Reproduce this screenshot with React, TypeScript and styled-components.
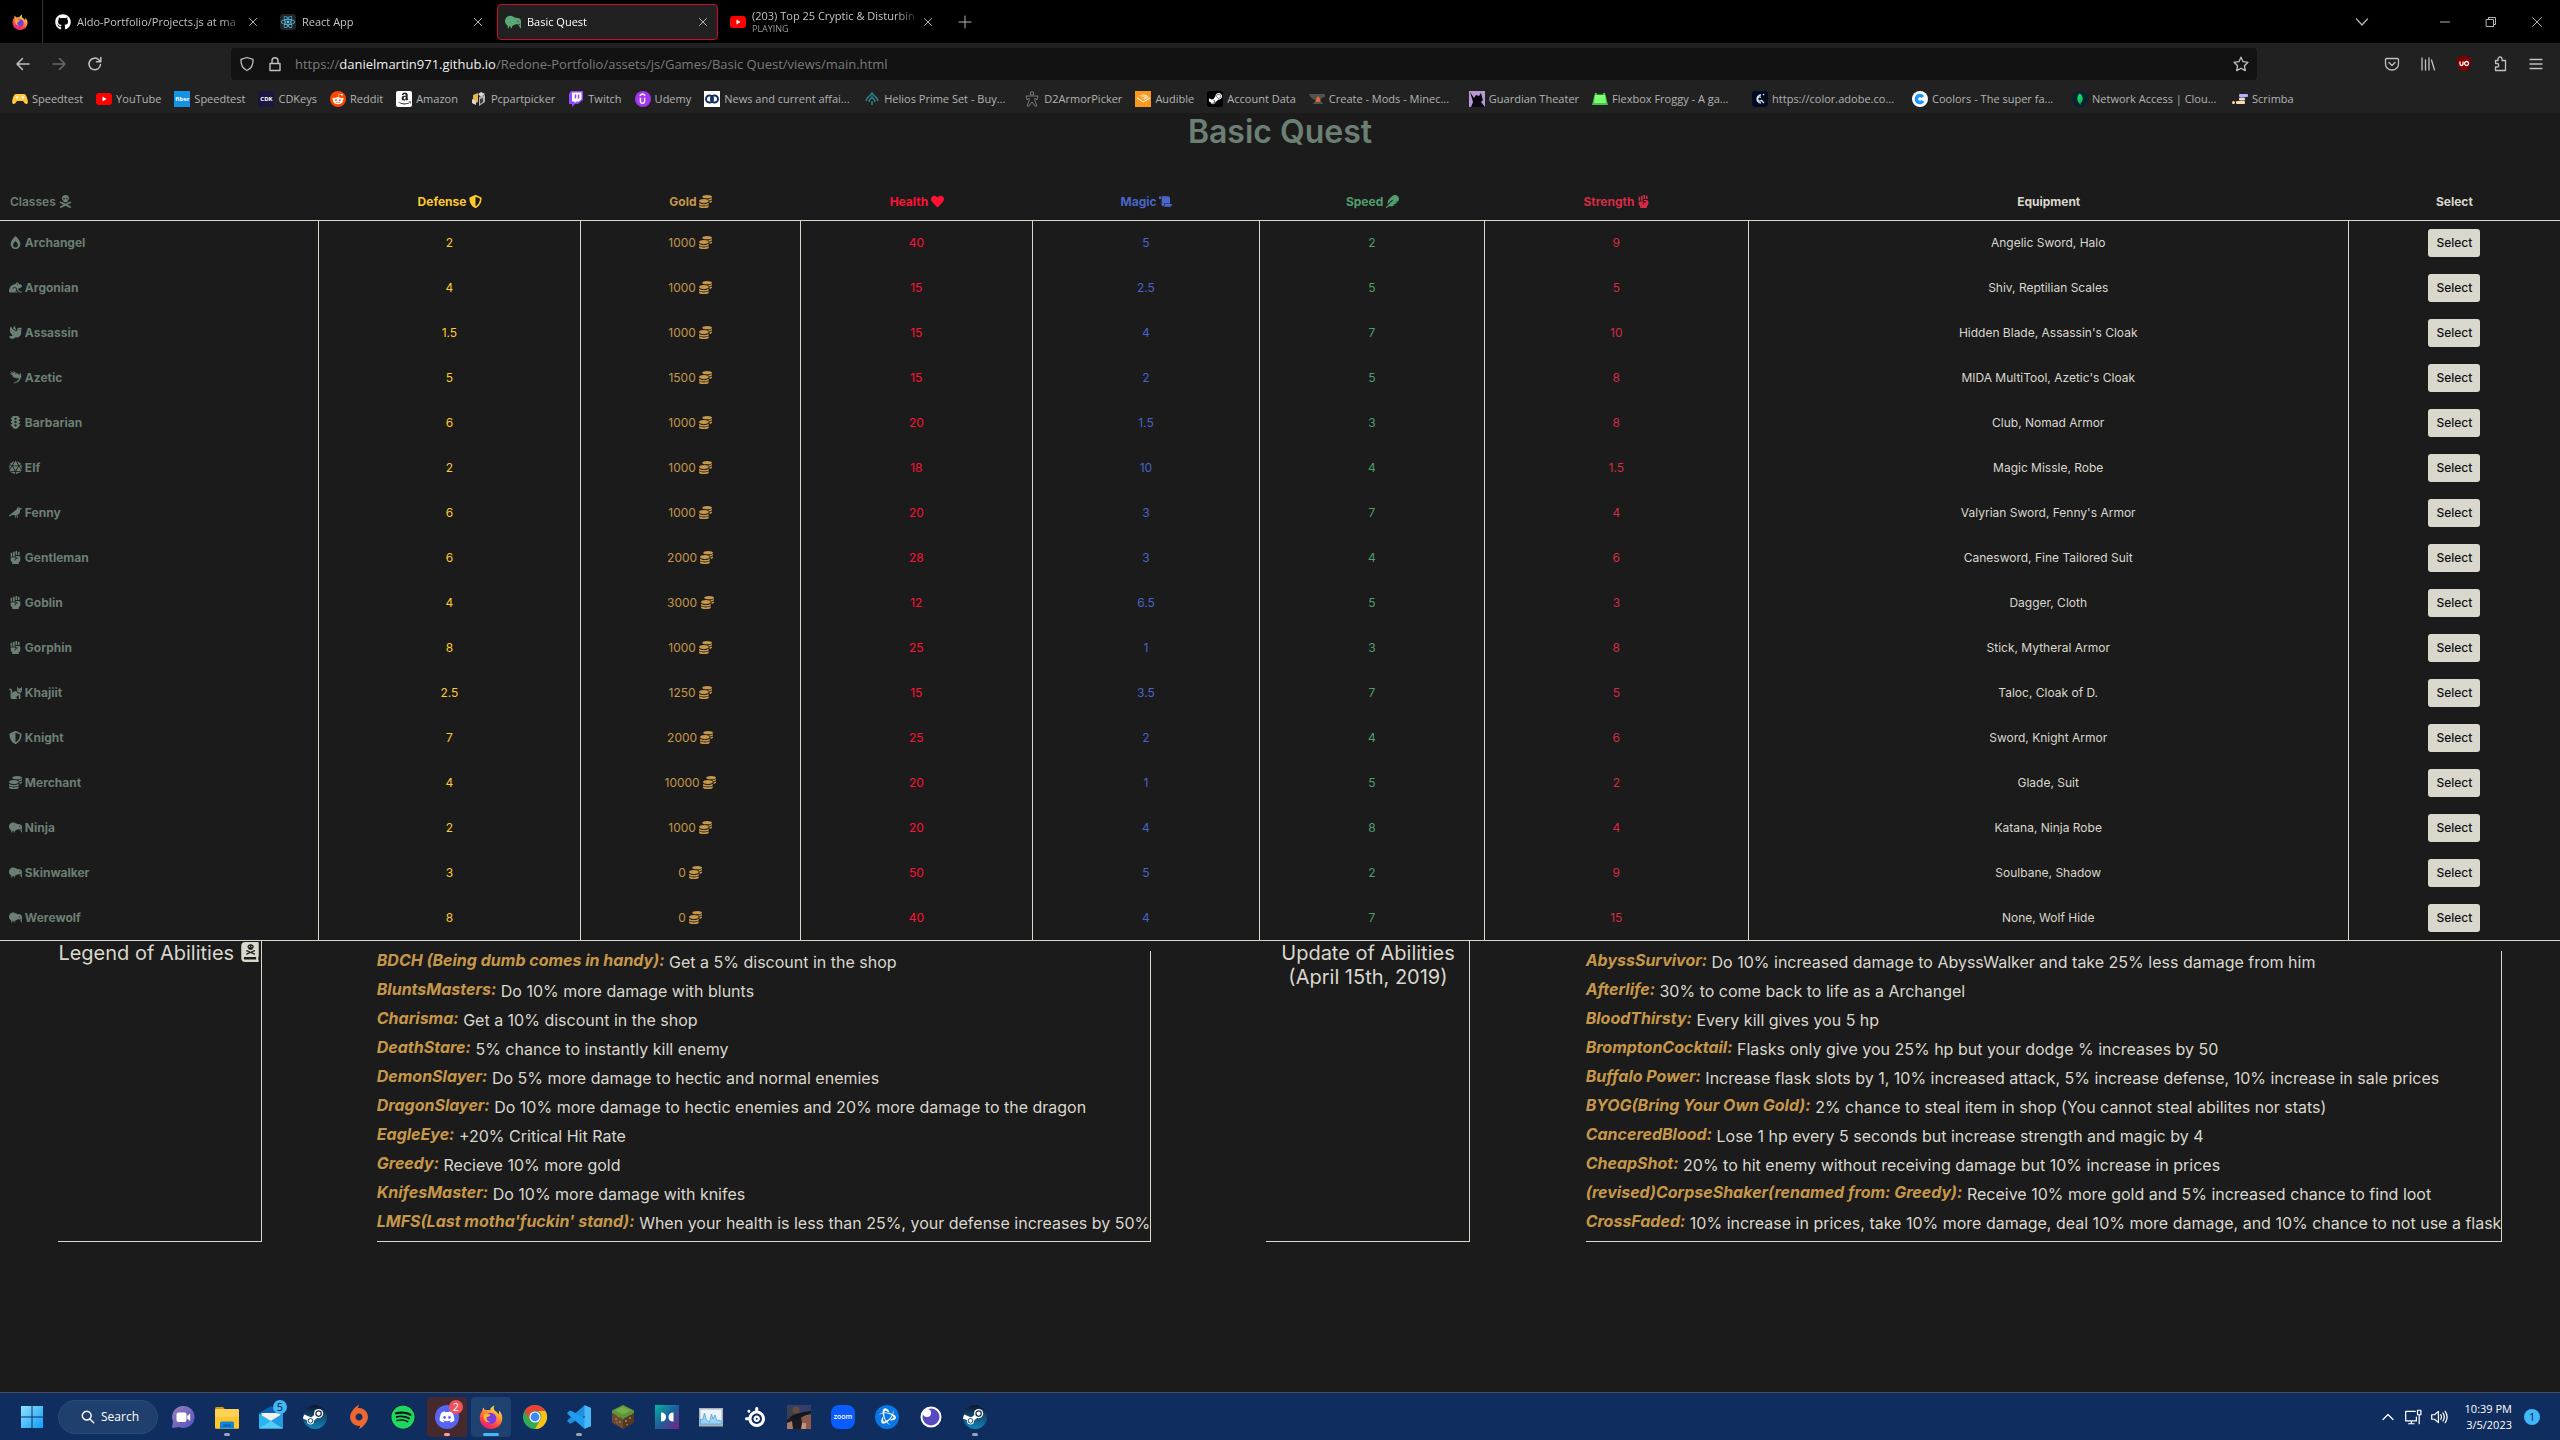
import React from "react";
import styled, { createGlobalStyle, css } from "styled-components";
import {
  FaBookDead,
  FaBurn,
  FaCat,
  FaCoins,
  FaCrow,
  FaDiceD20,
  FaDiscord,
  FaDove,
  FaFeather,
  FaFistRaised,
  FaFrog,
  FaGithub,
  FaHeart,
  FaKiwiBird,
  FaReact,
  FaRedditAlien,
  FaScroll,
  FaShieldAlt,
  FaSkullCrossbones,
  FaSpotify,
  FaSteamSymbol,
  FaStudiovinari,
  FaTrafficLight,
} from "react-icons/fa";
import {
  SiAmazon,
  SiAudible,
  SiBattledotnet,
  SiCurseforge,
  SiMongodb,
  SiOrigin,
  SiSteelseries,
  SiUdemy,
} from "react-icons/si";

const paper = "#dad7cd";
const page = "#1b1b1b";
const chromeText = "#b4b4b4";
const uiFont = `"Open Sans", "Noto Sans", sans-serif`;
const pageFont = `Inter, "Liberation Sans", sans-serif`;

const GlobalStyle = createGlobalStyle`
  * { box-sizing: border-box; }
  body { margin: 0; background: ${page}; }
  button, input { font: inherit; color: inherit; }
`;

const Screen = styled.div`
  min-height: 100vh;
  display: flex;
  flex-direction: column;
  background: ${page};
`;

/* ---------- browser window ---------- */

const bare = css`
  border: 0;
  padding: 0;
  background: none;
  display: grid;
  place-items: center;
`;

const TabStrip = styled.div`
  display: flex;
  align-items: center;
  height: 43px;
  background: #000;
  color: #c4c4c4;
  font: 11px/14px ${uiFont};
`;

const ViewButton = styled.button`
  ${bare}
  width: 43px;
  height: 43px;
  padding-right: 3px;
  border-right: 1px solid #333;
`;

const TabList = styled.div`
  display: flex;
  gap: 4px;
  padding-left: 4px;
`;

const Tab = styled.div<{ $active?: boolean }>`
  display: flex;
  align-items: center;
  width: 221px;
  height: 36px;
  padding: 0 6px 0 7px;
  border: 1px solid ${(p) => (p.$active ? "#c8102e" : "transparent")};
  border-radius: 4px;
  background: ${(p) => (p.$active ? "#212121" : "transparent")};
  color: ${(p) => (p.$active ? "#fff" : "inherit")};
`;

const TabText = styled.div`
  flex: 1;
  min-width: 0;
  padding-left: 6px;
  white-space: nowrap;
  mask-image: linear-gradient(to left, transparent, #000 24px);
`;

const TabNote = styled.div`
  font-size: 9px;
  line-height: 11px;
  color: #9a9a9a;
`;

const PlainButton = styled.button<{ $w?: number }>`
  ${bare}
  flex: none;
  width: ${(p) => p.$w ?? 16}px;
  height: 16px;
  color: ${chromeText};
`;

const NewTab = styled(PlainButton)`
  margin-left: 14px;
`;

const WindowButtons = styled.div`
  display: flex;
  align-items: center;
  margin-left: auto;
`;

const Toolbar = styled.div`
  display: flex;
  align-items: center;
  padding: 5px 8px 4px 7px;
  background: #212121;
  color: #c0c0c0;
`;

const NavButtons = styled.div`
  display: flex;
  gap: 4px;
  width: 224px;
`;

const ToolButton = styled.button<{ $dim?: boolean }>`
  ${bare}
  width: 32px;
  height: 32px;
  opacity: ${(p) => (p.$dim ? 0.45 : 1)};
`;

const AddressBar = styled.div`
  display: flex;
  align-items: center;
  gap: 12px;
  flex: 1;
  height: 32px;
  padding: 0 8px;
  border-radius: 4px;
  background: #121212;
`;

const Address = styled.a`
  flex: 1;
  font: 13px/20px ${uiFont};
  color: #7b7b7b;
  text-decoration: none;
  white-space: nowrap;
  b {
    font-weight: 400;
    color: #f0f0f0;
  }
`;

const ToolGroup = styled.div`
  display: flex;
  gap: 4px;
  width: 295px;
  justify-content: flex-end;
`;

const Bookmarks = styled.nav`
  display: flex;
  align-items: center;
  gap: 13px;
  height: 29px;
  padding: 0 12px;
  background: #212121;
`;

const Bookmark = styled.a<{ $full: boolean }>`
  display: flex;
  flex: none;
  align-items: center;
  gap: 4px;
  width: ${(p) => (p.$full ? "147px" : "auto")};
  color: ${chromeText};
  font: 11px/16px ${uiFont};
  text-decoration: none;
  white-space: nowrap;
`;

const Favicon = styled.span<{ $bg?: string; $fg?: string; $round?: number }>`
  display: grid;
  place-items: center;
  flex: none;
  width: 16px;
  height: 16px;
  overflow: hidden;
  border-radius: ${(p) => p.$round ?? 0}px;
  background: ${(p) => p.$bg ?? "none"};
  color: ${(p) => p.$fg ?? "#fff"};
  font: bold 6px/16px ${uiFont};
`;

/* ---------- game page ---------- */

const Game = styled.main`
  flex: 1;
  color: ${paper};
  font: 12px/18px ${pageFont};
`;

const Title = styled.h1`
  margin: 0 0 32px;
  color: #6b7f73;
  font-size: 32px;
  font-weight: 600;
  line-height: 38px;
  text-align: center;
`;

const ClassTable = styled.table`
  width: 100%;
  table-layout: fixed;
  border-collapse: separate;
  border-spacing: 0;
  text-align: center;
`;

const Col = styled.col<{ $share: number }>`
  width: ${(p) => p.$share}%;
`;

const Th = styled.th<{ $tone?: string }>`
  height: 38px;
  padding: 0;
  border-bottom: 1px solid ${paper};
  color: ${(p) => p.$tone ?? paper};
  &:first-child {
    padding-left: 10px;
    text-align: left;
    font-weight: 600;
  }
`;

const Row = styled.tr`
  height: 45px;
  & > :not(:last-child) {
    border-right: 1px solid ${paper};
  }
  &:last-child > * {
    border-bottom: 1px solid ${paper};
  }
`;

const Td = styled.td<{ $tone?: string }>`
  padding: 0 0 1px;
  color: ${(p) => p.$tone ?? paper};
`;

const NameCell = styled.th`
  padding: 0 0 1px 9px;
  color: #6b7f73;
  font-weight: 700;
  text-align: left;
`;

const Glyph = styled.span<{ $size: number }>`
  display: inline-block;
  vertical-align: -2px;
  font-size: ${(p) => p.$size}px;
  line-height: 0;
  svg {
    width: auto;
    height: 1em;
  }
`;

const SelectButton = styled.button`
  width: 52px;
  height: 28px;
  padding: 0;
  border: 0;
  border-radius: 3px;
  background: ${paper};
  color: #111;
  font-weight: 500;
`;

const Abilities = styled.div`
  display: flex;
  justify-content: space-around;
`;

const Heading = styled.h2`
  width: 204px;
  margin: 0;
  border: solid ${paper};
  border-width: 0 1px 1px 0;
  font-size: 20px;
  font-weight: 400;
  line-height: 24px;
  text-align: center;
`;

const AbilityList = styled.ul`
  margin: 10px 0 0;
  padding: 0;
  list-style: none;
  border: solid ${paper};
  border-width: 0 1px 1px 0;
`;

const Ability = styled.li`
  height: 29px;
  font-size: 16px;
  line-height: 22px;
  white-space: nowrap;
  em {
    color: #c69749;
    font-weight: 700;
    line-height: 16px;
    vertical-align: 2px;
  }
`;

/* ---------- taskbar ---------- */

const Taskbar = styled.footer`
  display: flex;
  align-items: center;
  gap: 4px;
  height: 48px;
  padding: 0 20px 0 12px;
  border-top: 1px solid #434d5e;
  background: #0f2d5e;
  color: #fff;
  font: 12px/16px ${uiFont};
`;

const AppButton = styled.button<{ $tint?: string; $run?: string; $wide?: boolean }>`
  ${bare}
  position: relative;
  width: 40px;
  height: 40px;
  border-radius: 4px;
  background: ${(p) => p.$tint ?? "none"};
  &::after {
    content: "";
    position: absolute;
    left: 50%;
    bottom: 1px;
    width: ${(p) => (p.$wide ? 16 : 6)}px;
    height: 3px;
    border-radius: 2px;
    transform: translateX(-50%);
    background: ${(p) => p.$run ?? "none"};
  }
`;

const SearchButton = styled.button`
  display: flex;
  align-items: center;
  gap: 6px;
  width: 100px;
  height: 34px;
  margin: 0 1px 0 2px;
  padding: 0 0 0 22px;
  border: 1px solid #2b4a78;
  border-radius: 17px;
  background: #1f3f6d;
`;

const Badge = styled.span<{ $bg: string; $fg: string }>`
  position: absolute;
  top: 3px;
  right: 4px;
  display: grid;
  place-items: center;
  width: 14px;
  height: 14px;
  border-radius: 50%;
  background: ${(p) => p.$bg};
  color: ${(p) => p.$fg};
  font-size: 11px;
  line-height: 14px;
`;

const Tray = styled.div`
  display: flex;
  align-items: center;
  gap: 8px;
  margin-left: auto;
`;

const Clock = styled.time`
  width: 56px;
  font-size: 11px;
  text-align: right;
`;

const Notice = styled.span`
  display: grid;
  place-items: center;
  width: 16px;
  height: 16px;
  margin-left: 4px;
  border-radius: 50%;
  background: #41b8f9;
  color: #0a1a30;
  font-size: 10px;
`;

/* ---------- drawings ---------- */

type LineProps = { d: string; s?: number; w?: number; v?: number };
const Line = ({ d, s = 16, w = 1, v = 16 }: LineProps) => (
  <svg width={s} height={s} viewBox={`0 0 ${v} ${v}`} fill="none" stroke="currentColor" strokeWidth={w} strokeLinecap="round" strokeLinejoin="round" aria-hidden>
    <path d={d} />
  </svg>
);

const Cross = () => <Line d="M4.500 4.500l7 7M11.500 4.500l-7 7" />;

const Firefox = ({ s, id }: { s: number; id: string }) => (
  <svg width={s} height={s} viewBox="0 0 24 24" aria-hidden>
    <defs>
      <linearGradient id={id} x1="0.8" y1="0" x2="0.3" y2="1">
        <stop offset="0" stopColor="#fff44f" />
        <stop offset="0.35" stopColor="#ffa436" />
        <stop offset="0.7" stopColor="#ff4a3c" />
        <stop offset="1" stopColor="#e31587" />
      </linearGradient>
    </defs>
    <path fill={`url(#${id})`} d="M15.500 0.600c-1 1.600-1.200 3 .1 5C18 7 19 8 19.400 9.800c.6-1.200.8-2.800.5-4.300 2.400 2.200 3.600 5 3.400 8.300C22.800 20 18 24 12 24S.9 19.200.8 13c0-3 1-5.600 2.600-7.200C3.400 4.500 3.700 3.400 4.400 2.400 5.200 4 6 5 7.400 5.300c1.200-.4 2.600-.4 3.700 0C11.500 3 13.200 1.200 15.500.6z" />
    <circle cx="11.800" cy="13.400" r="5.600" fill="#7a3ee0" />
    <path fill="#ffb52e" d="M4.500 9.500c2.300-1.200 4.900-.9 7 .4-.4 1.300-2 1.600-3.600 2.100-1 2.500.7 4.600 3.300 4.900-3.600 1.600-7.500-2.400-6.700-7.400z" />
  </svg>
);

const Play = ({ s = 16 }: { s?: number }) => (
  <svg width={s} height={s} viewBox="0 0 16 16" style={{ flex: "none" }} aria-hidden>
    <rect y="2" width="16" height="12" rx="3" fill="#f00" />
    <path d="M6.500 5.500v5l4-2.500z" fill="#fff" />
  </svg>
);

const Pixel = ({ children, s = 24 }: { children: React.ReactNode; s?: number }) => (
  <svg width={s} height={s} viewBox="0 0 24 24" aria-hidden>
    {children}
  </svg>
);

const Steam = ({ id }: { id: string }) => (
  <Pixel>
    <defs>
      <linearGradient id={id} x1="0" y1="0" x2="0" y2="1">
        <stop offset="0" stopColor="#0d1530" />
        <stop offset="1" stopColor="#1387b8" />
      </linearGradient>
    </defs>
    <circle cx="12" cy="12" r="12" fill={`url(#${id})`} />
    <path d="M0.500 11.500l8 3.500 7-6" stroke="#fff" strokeWidth="4.200" fill="none" />
    <circle cx="7.500" cy="15.800" r="3.600" fill="#fff" />
    <circle cx="15.600" cy="8.600" r="4.600" fill="#fff" />
    <circle cx="15.600" cy="8.600" r="2.700" fill="#fff" stroke="#17284a" strokeWidth="1.200" />
    <circle cx="7.500" cy="15.800" r="2.300" fill="none" stroke="#17477a" />
  </Pixel>
);

const WindowsLogo = () => (
  <Pixel>
    <defs>
      <linearGradient id="win" x1="0" y1="0" x2="1" y2="1">
        <stop offset="0" stopColor="#8fe3ff" />
        <stop offset="1" stopColor="#0f9bf5" />
      </linearGradient>
    </defs>
    <path fill="url(#win)" d="M1 1h10.500v10.500H1zM12.500 1H23v10.500H12.500zM1 12.500h10.500V23H1zM12.500 12.500H23V23H12.500z" />
  </Pixel>
);

const ChatLogo = () => (
  <Pixel>
    <defs>
      <linearGradient id="chat" x1="0" y1="0" x2="1" y2="1">
        <stop offset="0" stopColor="#9b7fb5" />
        <stop offset="1" stopColor="#4f52c4" />
      </linearGradient>
    </defs>
    <path fill="url(#chat)" d="M12.500 1A11 11 0 1 1 8 22L1 23l1-6.500A11 11 0 0 1 12.500 1z" />
    <rect x="5.500" y="7.500" width="10" height="9.500" rx="2" fill="#fff" />
    <path d="M16.200 11l3-2.500v7.500l-3-2.500z" fill="#fff" />
  </Pixel>
);

const FolderLogo = () => (
  <Pixel>
    <path d="M0 3.500Q0 2 1.500 2H8l2.500 3H0z" fill="#d79a0c" />
    <rect y="4" width="24" height="19.500" rx="1" fill="#ffd257" />
    <path d="M0 12h24v10.500q0 1-1 1H1q-1 0-1-1z" fill="#fcc62f" />
    <path d="M5 23.500V18q0-1.500 1.500-1.500h11Q19 16.500 19 18v5.500z" fill="#1583d4" />
    <rect x="8" y="19.500" width="8" height="2" rx="1" fill="#0b5ea5" />
  </Pixel>
);

const MailLogo = () => (
  <Pixel>
    <path d="M0 8l12-7 12 7v5H0z" fill="#0f5fb0" />
    <path d="M2.500 8h19v7l-9.500 5-9.500-5z" fill="#f1f1f1" />
    <path d="M0 8.500L24 23.500H0z" fill="#2bb5ef" />
    <path d="M24 8.500v15H0z" fill="#57cbf8" />
    <path d="M24 8.500v15L12 16z" fill="#239be0" />
  </Pixel>
);

const ChromeLogo = () => (
  <Pixel>
    <circle cx="12" cy="12" r="12" fill="#34a853" />
    <path d="M1.600 6A12 12 0 0 1 22.400 6H12a6 6 0 0 0-5.200 9z" fill="#ea4335" />
    <path d="M22.400 6A12 12 0 0 1 12 24l5.200-9A6 6 0 0 0 15 6z" fill="#fbc116" />
    <circle cx="12" cy="12" r="5.600" fill="#fff" />
    <circle cx="12" cy="12" r="4.400" fill="#4285f4" />
  </Pixel>
);

const CodeLogo = () => (
  <Pixel>
    <path d="M17 1L2.200 14.500q-1 .9-1.900.1L0 14q-.5-.8.300-1.500M17 23L2.200 9.500" fill="none" />
    <path d="M17.500.2L24 3v4.500L4.200 18.200q-.9.600-1.700 0L.6 16.600q-.8-.9 0-1.700z" fill="#1f8fe0" />
    <path d="M17.500 23.800L24 21v-4.500L4.200 5.800q-.9-.6-1.700 0L.6 7.400q-.8.900 0 1.700z" fill="#1f9cf0" />
    <path d="M17.500.2L24 3v18l-6.500 2.800z" fill="#48b9f7" />
  </Pixel>
);

const BlockLogo = () => (
  <Pixel>
    <path d="M12 0l11 5.500v12L12 24 1 17.500v-12z" fill="#6b4a30" />
    <path d="M12 12l11-6v11.500L12 24z" fill="#54391f" />
    <path d="M12 0l11 5.500v2L20 10l-2 .5-2 1.500-2 .5-2 2-2-2-3-.5-2-2-4-2v-2.500z" fill="#5d9438" />
    <path d="M12 1.500l8 4-8 4-8-4z" fill="#74ad4a" />
    <path d="M4 13h2v2H4zM8 16h2v2H8zM14 15h2v2h-2zM18 12h2v2h-2zM5 17h2v1H5zM15 19h2v1h-2z" fill="#96704c" />
  </Pixel>
);

const MirrorLogo = () => (
  <Pixel>
    <defs>
      <linearGradient id="mirror" x1="0" y1="0" x2="1" y2="1">
        <stop offset="0" stopColor="#05b5a0" />
        <stop offset="0.5" stopColor="#1c5f9b" />
        <stop offset="1" stopColor="#7b2384" />
      </linearGradient>
    </defs>
    <rect width="24" height="24" fill="url(#mirror)" />
    <path d="M6 7.500q5 0 5 4.500t-5 4.500zM18.500 7.500q-5 0-5 4.500t5 4.500z" fill="#fff" />
  </Pixel>
);

const MonitorLogo = () => (
  <Pixel>
    <rect y="3" width="24" height="18.500" fill="#a9b4bd" />
    <rect x="1.500" y="4.500" width="21" height="14.500" fill="#edf3f8" />
    <path d="M1.500 19v-5l2 1 2-7 2 7 3 2 2-8 1.500 5 2-4 2 6 2-1 2.500 1V19z" fill="#9ed2f5" stroke="#4ba3dd" strokeWidth="0.800" />
  </Pixel>
);

const SoldierLogo = () => (
  <Pixel>
    <rect width="24" height="24" fill="#3b3f52" />
    <path d="M0 0h24v9H14z" fill="#35406a" />
    <path d="M13 10h11v14H10z" fill="#8c5a4c" />
    <path d="M0 15l6-5 8 2 2 12H0z" fill="#1c1a21" />
    <circle cx="9" cy="5" r="3.500" fill="#6b4a3e" />
    <path d="M3 12l6-3 8-2 7-1v2l-7 3-8 4z" fill="#14151c" />
    <path d="M0 18l5-2 1 8H0z" fill="#a97b68" />
    <path d="M15 18h4v6h-5z" fill="#c39078" />
  </Pixel>
);

const ZoomLogo = styled.span`
  display: grid;
  place-items: center;
  width: 24px;
  height: 24px;
  border-radius: 8px;
  background: #0b5cff;
  color: #fff;
  font: 600 7px/10px ${uiFont};
`;

const Disc = styled.span<{ $bg: string; $fg: string; $size: number }>`
  display: grid;
  place-items: center;
  width: 24px;
  height: 24px;
  border-radius: 50%;
  background: ${(p) => p.$bg};
  color: ${(p) => p.$fg};
  font-size: ${(p) => p.$size}px;
`;

/* ---------- data ---------- */

type Icon = React.ComponentType;

const bookmarks: [string, React.ReactNode][] = [
  ["Speedtest", <Favicon><svg width="16" height="16" viewBox="0 0 16 16"><path d="M4 3h8c2 0 3 3 3.800 7 .4 3-1.800 4-3.300 2L11 10H5l-1.500 2C2 14-.2 13 .2 10 1 6 2 3 4 3z" fill="#ffc83d" /><path d="M3.500 6.500h3M5 5v3" stroke="#fff" /><circle cx="11" cy="6.500" r="1.300" fill="#fff" /></svg></Favicon>],
  ["YouTube", <Favicon><Play /></Favicon>],
  ["Speedtest", <Favicon $bg="#1592e6">fiber</Favicon>],
  ["CDKeys", <Favicon $bg="#1c1740">CDK</Favicon>],
  ["Reddit", <Favicon $bg="#ff4500" $round={8}><FaRedditAlien size={12} /></Favicon>],
  ["Amazon", <Favicon $bg="#fff" $fg="#222" $round={2}><SiAmazon size={13} /></Favicon>],
  ["Pcpartpicker", <Favicon><svg width="16" height="16" viewBox="0 0 16 16"><path d="M2 4l5-2v9l-5 2z" fill="#e2b64b" /><path d="M1 8l4 2v4l-4-2zM7 3l3-2 4 2-4 3z" fill="#d8d8d8" /><path d="M8 6l6-2v7l-6 4z" fill="#b3b3b3" /><path d="M9 8l3-1v4l-3 2z" fill="#3d3d3d" /></svg></Favicon>],
  ["Twitch", <Favicon><svg width="16" height="16" viewBox="0 0 16 16"><path d="M3 0h12v9l-5 4H7l-3 3v-3H1V3z" fill="#9146ff" /><path d="M4 1.500h9.500V8L11 10.500H8.500L6.500 12v-1.500H4z" fill="#fff" /><path d="M7.500 3.500v4M10.500 3.500v4" stroke="#9146ff" strokeWidth="1.500" /></svg></Favicon>],
  ["Udemy", <Favicon $bg="#a435f0" $round={8}><SiUdemy size={11} /></Favicon>],
  ["News and current affai...", <Favicon $bg="#fff"><svg width="16" height="16" viewBox="0 0 16 16" fill="none" stroke="#12305c" strokeWidth="2"><circle cx="5.500" cy="8" r="3.500" /><circle cx="10.500" cy="8" r="3.500" /></svg></Favicon>],
  ["Helios Prime Set - Buy...", <Favicon $fg="#2c7f89"><svg width="16" height="16" viewBox="0 0 16 16" fill="none" stroke="currentColor" strokeWidth="1.600"><path d="M2 10c0-4 4-4 6-8 2 4 6 4 6 8M5 11c0-3 2-3 3-5 1 2 3 2 3 5M8 10v4" /></svg></Favicon>],
  ["D2ArmorPicker", <Favicon $fg="#777"><svg width="16" height="16" viewBox="0 0 16 16" fill="none" stroke="currentColor"><path d="M6.500 1h3v3h-3zM2 5h12l-1 4-2-2v3l2 5h-2L8 11l-3 4H3l2-5V7L3 9z" /></svg></Favicon>],
  ["Audible", <Favicon $bg="#f8991c"><SiAudible size={13} /></Favicon>],
  ["Account Data", <Favicon $bg="#000" $round={3}><FaSteamSymbol size={15} /></Favicon>],
  ["Create - Mods - Minec...", <Favicon><svg width="16" height="16" viewBox="0 0 16 16"><path d="M0 3h16v3q-3 0-4 2v2l2 3H4l2-3V9Q2 8 0 3z" fill="#525252" /><path d="M9 5q3 3 1.500 6h-3Q6 8.500 9 5z" fill="#f16a2a" /></svg></Favicon>],
  ["Guardian Theater", <Favicon $bg="#b79ad0"><svg width="16" height="16" viewBox="0 0 16 16"><path d="M1 1l4 6 2-3 3 1 2-3 1 4 1 3-2 2 4 5H2l2-5z" fill="#0a0710" /></svg></Favicon>],
  ["Flexbox Froggy - A ga...", <Favicon><svg width="16" height="16" viewBox="0 0 16 16"><path d="M0 14l2-8 1-4q2-1 2.500 1.500h5Q11 1 13 2l1 4 2 8z" fill="#4bbf4b" /><path d="M3 4h10l1 8H2z" fill="#7dff72" /></svg></Favicon>],
  ["https://color.adobe.co...", <Favicon $bg="#020b20" $round={3}><svg width="16" height="16" viewBox="0 0 16 16" fill="none" stroke="#dfe6f3" strokeWidth="1.300"><path d="M9 4a4 4 0 1 0 0 8M9 6.500a2 2 0 1 0 0 3M9 9l3 3M11 4l1-1" /></svg></Favicon>],
  ["Coolors - The super fa...", <Favicon $bg="#fff" $round={8}><svg width="16" height="16" viewBox="0 0 16 16" fill="none"><path d="M10.800 10a3.500 3.500 0 1 1 0-4" stroke="#1b95ff" strokeWidth="3.500" /></svg></Favicon>],
  ["Network Access | Clou...", <Favicon $bg="#0a2230" $fg="#13d667" $round={8}><SiMongodb size={12} /></Favicon>],
  ["Scrimba", <Favicon><svg width="16" height="16" viewBox="0 0 16 16"><rect x="7" y="3" width="9" height="3" rx="1" fill="#b9a9ff" /><rect x="7" y="6.500" width="6" height="3" rx="1" fill="#e0e0e0" /><rect x="4" y="10" width="9" height="3" rx="1" fill="#ffd9a8" /><circle cx="1.500" cy="11.500" r="1.500" fill="#ffd9a8" /></svg></Favicon>],
];

const tones = ["#ffca2c", "#c69749", "#ff1133", "#4a64c8", "#4f9f6e", "#d62a45"];

const columns: { label: string; share: number; tone?: string; icon?: Icon }[] = [
  { label: "Classes", share: 12.46, tone: "#6b7f73", icon: FaSkullCrossbones },
  { label: "Defense", share: 10.23, tone: tones[0], icon: FaShieldAlt },
  { label: "Gold", share: 8.59, tone: tones[1], icon: FaCoins },
  { label: "Health", share: 9.07, tone: tones[2], icon: FaHeart },
  { label: "Magic", share: 8.87, tone: tones[3], icon: FaScroll },
  { label: "Speed", share: 8.79, tone: tones[4], icon: FaFeather },
  { label: "Strength", share: 10.3, tone: tones[5], icon: FaFistRaised },
  { label: "Equipment", share: 23.44 },
  { label: "Select", share: 8.25 },
];

const classes: [Icon, string, string[], string][] = [
  [FaBurn, "Archangel", ["2", "1000", "40", "5", "2", "9"], "Angelic Sword, Halo"],
  [FaFrog, "Argonian", ["4", "1000", "15", "2.5", "5", "5"], "Shiv, Reptilian Scales"],
  [FaDove, "Assassin", ["1.5", "1000", "15", "4", "7", "10"], "Hidden Blade, Assassin's Cloak"],
  [FaStudiovinari, "Azetic", ["5", "1500", "15", "2", "5", "8"], "MIDA MultiTool, Azetic's Cloak"],
  [FaTrafficLight, "Barbarian", ["6", "1000", "20", "1.5", "3", "8"], "Club, Nomad Armor"],
  [FaDiceD20, "Elf", ["2", "1000", "18", "10", "4", "1.5"], "Magic Missle, Robe"],
  [FaCrow, "Fenny", ["6", "1000", "20", "3", "7", "4"], "Valyrian Sword, Fenny's Armor"],
  [FaFistRaised, "Gentleman", ["6", "2000", "28", "3", "4", "6"], "Canesword, Fine Tailored Suit"],
  [FaFistRaised, "Goblin", ["4", "3000", "12", "6.5", "5", "3"], "Dagger, Cloth"],
  [FaFistRaised, "Gorphin", ["8", "1000", "25", "1", "3", "8"], "Stick, Mytheral Armor"],
  [FaCat, "Khajiit", ["2.5", "1250", "15", "3.5", "7", "5"], "Taloc, Cloak of D."],
  [FaShieldAlt, "Knight", ["7", "2000", "25", "2", "4", "6"], "Sword, Knight Armor"],
  [FaCoins, "Merchant", ["4", "10000", "20", "1", "5", "2"], "Glade, Suit"],
  [FaKiwiBird, "Ninja", ["2", "1000", "20", "4", "8", "4"], "Katana, Ninja Robe"],
  [FaKiwiBird, "Skinwalker", ["3", "0", "50", "5", "2", "9"], "Soulbane, Shadow"],
  [FaKiwiBird, "Werewolf", ["8", "0", "40", "4", "7", "15"], "None, Wolf Hide"],
];

const legend: [string, string][] = [
  ["BDCH (Being dumb comes in handy):", "Get a 5% discount in the shop"],
  ["BluntsMasters:", "Do 10% more damage with blunts"],
  ["Charisma:", "Get a 10% discount in the shop"],
  ["DeathStare:", "5% chance to instantly kill enemy"],
  ["DemonSlayer:", "Do 5% more damage to hectic and normal enemies"],
  ["DragonSlayer:", "Do 10% more damage to hectic enemies and 20% more damage to the dragon"],
  ["EagleEye:", "+20% Critical Hit Rate"],
  ["Greedy:", "Recieve 10% more gold"],
  ["KnifesMaster:", "Do 10% more damage with knifes"],
  ["LMFS(Last motha'fuckin' stand):", "When your health is less than 25%, your defense increases by 50%"],
];

const updates: [string, string][] = [
  ["AbyssSurvivor:", "Do 10% increased damage to AbyssWalker and take 25% less damage from him"],
  ["Afterlife:", "30% to come back to life as a Archangel"],
  ["BloodThirsty:", "Every kill gives you 5 hp"],
  ["BromptonCocktail:", "Flasks only give you 25% hp but your dodge % increases by 50"],
  ["Buffalo Power:", "Increase flask slots by 1, 10% increased attack, 5% increase defense, 10% increase in sale prices"],
  ["BYOG(Bring Your Own Gold):", "2% chance to steal item in shop (You cannot steal abilites nor stats)"],
  ["CanceredBlood:", "Lose 1 hp every 5 seconds but increase strength and magic by 4"],
  ["CheapShot:", "20% to hit enemy without receiving damage but 10% increase in prices"],
  ["(revised)CorpseShaker(renamed from: Greedy):", "Receive 10% more gold and 5% increased chance to find loot"],
  ["CrossFaded:", "10% increase in prices, take 10% more damage, deal 10% more damage, and 10% chance to not use a flask"],
];

const idle = "#9aa5b5";

type TaskApp = { name: string; art: React.ReactNode; run?: string; tint?: string; wide?: boolean; badge?: [string, string, string] };

const apps: TaskApp[] = [
  { name: "Chat", art: <ChatLogo /> },
  { name: "File Explorer", art: <FolderLogo />, run: idle },
  { name: "Mail", art: <MailLogo />, badge: ["5", "#41b8f9", "#0a1a30"] },
  { name: "Steam", art: <Steam id="steam-a" /> },
  { name: "Origin", art: <SiOrigin size={24} color="#ee6730" /> },
  { name: "Spotify", art: <Disc $bg="#111" $fg="#1ed760" $size={24}><FaSpotify /></Disc> },
  { name: "Discord", art: <Disc $bg="#5865f2" $fg="#fff" $size={16}><FaDiscord /></Disc>, tint: "#45292c", run: "#ff9aa5", badge: ["2", "#f0525c", "#fff"] },
  { name: "Firefox", art: <Firefox s={24} id="fx-task" />, tint: "#1f416f", run: "#41b8f9", wide: true },
  { name: "Chrome", art: <ChromeLogo /> },
  { name: "Visual Studio Code", art: <CodeLogo />, run: idle },
  { name: "Minecraft", art: <BlockLogo /> },
  { name: "Mirror", art: <MirrorLogo /> },
  { name: "Resource Monitor", art: <MonitorLogo /> },
  { name: "SteelSeries", art: <SiSteelseries size={20} color="#fff" /> },
  { name: "Shooter", art: <SoldierLogo /> },
  { name: "Zoom", art: <ZoomLogo>zoom</ZoomLogo> },
  { name: "Battle.net", art: <Disc $bg="#0a76e3" $fg="#fff" $size={17}><SiBattledotnet /></Disc> },
  { name: "Insomnia", art: <Pixel><circle cx="12" cy="12" r="9.500" fill="#5849be" stroke="#fff" strokeWidth="2" /><circle cx="8" cy="8" r="4" fill="#fff" /></Pixel> },
  { name: "Steam window", art: <Steam id="steam-b" />, run: idle },
];

/* ---------- parts ---------- */

const Inline = ({ icon: I, size = 13 }: { icon: Icon; size?: number }) => (
  <Glyph $size={size} aria-hidden>
    <I />
  </Glyph>
);

const AbilityItems = ({ items }: { items: [string, string][] }) => (
  <AbilityList>
    {items.map(([name, text]) => (
      <Ability key={name}>
        <em>{name}</em> {text}
      </Ability>
    ))}
  </AbilityList>
);

export default function App() {
  return (
    <Screen>
      <GlobalStyle />
      <header>
        <TabStrip>
          <ViewButton aria-label="Firefox View"><Firefox s={16} id="fx-view" /></ViewButton>
          <TabList>
            <Tab>
              <FaGithub size={16} color="#fff" />
              <TabText>Aldo-Portfolio/Projects.js at ma</TabText>
              <PlainButton aria-label="Close tab"><Cross /></PlainButton>
            </Tab>
            <Tab>
              <Favicon $bg="#20232a" $fg="#61dafb" $round={3}><FaReact size={14} /></Favicon>
              <TabText>React App</TabText>
              <PlainButton aria-label="Close tab"><Cross /></PlainButton>
            </Tab>
            <Tab $active>
              <Favicon $fg="#5aa876"><FaKiwiBird size={16} /></Favicon>
              <TabText>Basic Quest</TabText>
              <PlainButton aria-label="Close tab"><Cross /></PlainButton>
            </Tab>
            <Tab>
              <Play />
              <TabText>
                (203) Top 25 Cryptic &amp; Disturbin
                <TabNote>PLAYING</TabNote>
              </TabText>
              <PlainButton aria-label="Close tab"><Cross /></PlainButton>
            </Tab>
          </TabList>
          <NewTab aria-label="New tab"><Line d="M8 2v12M2 8h12" /></NewTab>
          <WindowButtons>
            <PlainButton $w={120} aria-label="List all tabs"><Line d="M2.500 5l5.500 6 5.500-6" w={1.3} /></PlainButton>
            <PlainButton $w={46} aria-label="Minimize"><Line d="M3.500 8h9" /></PlainButton>
            <PlainButton $w={46} aria-label="Restore"><Line d="M3.500 5.500h7v7h-7zM5.500 5.500v-2h7v7h-2" /></PlainButton>
            <PlainButton $w={46} aria-label="Close"><Line d="M3.500 3.500l9 9M12.500 3.500l-9 9" /></PlainButton>
          </WindowButtons>
        </TabStrip>
        <Toolbar>
          <NavButtons>
            <ToolButton aria-label="Back"><Line d="M14 8H2M7.500 2.500L2 8l5.500 5.500" w={1.5} /></ToolButton>
            <ToolButton $dim aria-label="Forward"><Line d="M2 8h12M8.500 2.500L14 8l-5.500 5.500" w={1.5} /></ToolButton>
            <ToolButton aria-label="Reload"><Line d="M13.500 8.500A5.800 5.800 0 1 1 12 4l1.500 1.500M13.800 1.500v4.200H9.500" w={1.5} /></ToolButton>
          </NavButtons>
          <AddressBar>
            <Line d="M8 1.500l6 1.800c.3 5-1.500 9.200-6 11.200-4.500-2-6.300-6.200-6-11.200z" w={1.3} />
            <Line d="M3 7.500h10v7H3zM5 7.500V4.800a3 3 0 0 1 6 0v2.700" w={1.4} />
            <Address href="#top">
              https://<b>danielmartin971.github.io</b>/Redone-Portfolio/assets/js/Games/Basic Quest/views/main.html
            </Address>
            <Line d="M8 1.200l2.100 4.500 4.900.6-3.600 3.400.9 4.900L8 12.200l-4.300 2.400.9-4.900L1 6.300l4.900-.6z" w={1.3} />
          </AddressBar>
          <ToolGroup>
            <ToolButton aria-label="Pocket"><Line d="M2.500 2.500h11q1 0 1 1V8a6.500 6 0 0 1-13 0V3.500q0-1 1-1zM5 6.500l3 3 3-3" w={1.3} /></ToolButton>
            <ToolButton aria-label="Library"><Line d="M2 2v12M5.500 4v10M9 2v12M11.500 4l3 10" w={1.3} /></ToolButton>
            <ToolButton aria-label="uBlock Origin">
              <svg width="16" height="16" viewBox="0 0 16 16" aria-hidden>
                <path d="M8 0l7 2c0 7-1 11-7 14C2 13 1 9 1 2z" fill="#800000" />
                <path d="M4 5.500v2.500q0 1.500 1.500 1.500T7 8V5.500M10.500 5.500a2 2 0 1 0 .1 0z" fill="none" stroke="#fff" strokeWidth="1.300" />
              </svg>
            </ToolButton>
            <ToolButton aria-label="Extensions"><Line d="M6 4.500V3a2 2 0 0 1 4 0v1.500h3.500v10h-10V11H5a1.700 1.700 0 0 0 0-3.500H3.500v-3z" w={1.3} /></ToolButton>
            <ToolButton aria-label="Application menu"><Line d="M2 3.500h12M2 8h12M2 12.500h12" w={1.3} /></ToolButton>
          </ToolGroup>
        </Toolbar>
        <Bookmarks aria-label="Bookmarks">
          {bookmarks.map(([name, icon], i) => (
            <Bookmark key={i} href="#top" $full={name.endsWith("...")}>
              {icon}
              {name}
            </Bookmark>
          ))}
        </Bookmarks>
      </header>

      <Game id="top">
        <Title>Basic Quest</Title>
        <ClassTable>
          <colgroup>
            {columns.map((c) => (
              <Col key={c.label} $share={c.share} />
            ))}
          </colgroup>
          <thead>
            <tr>
              {columns.map((c) => (
                <Th key={c.label} $tone={c.tone} scope="col">
                  {c.label} {c.icon && <Inline icon={c.icon} />}
                </Th>
              ))}
            </tr>
          </thead>
          <tbody>
            {classes.map(([icon, name, stats, gear]) => (
              <Row key={name}>
                <NameCell scope="row">
                  <Inline icon={icon} /> {name}
                </NameCell>
                {stats.map((v, i) => (
                  <Td key={i} $tone={tones[i]}>
                    {v} {i === 1 && <Inline icon={FaCoins} />}
                  </Td>
                ))}
                <Td>{gear}</Td>
                <Td>
                  <SelectButton type="button">Select</SelectButton>
                </Td>
              </Row>
            ))}
          </tbody>
        </ClassTable>
        <Abilities>
          <Heading>
            Legend of Abilities <Inline icon={FaBookDead} size={20} />
          </Heading>
          <AbilityItems items={legend} />
          <Heading>Update of Abilities (April 15th, 2019)</Heading>
          <AbilityItems items={updates} />
        </Abilities>
      </Game>

      <Taskbar>
        <AppButton aria-label="Start"><WindowsLogo /></AppButton>
        <SearchButton>
          <Line d="M6.500 1.500a5 5 0 1 0 .1 0zM10.200 10.200l4.300 4.300" w={1.6} s={14} />
          Search
        </SearchButton>
        {apps.map((a) => (
          <AppButton key={a.name} aria-label={a.name} $tint={a.tint} $run={a.run} $wide={a.wide}>
            {a.art}
            {a.badge && <Badge $bg={a.badge[1]} $fg={a.badge[2]}>{a.badge[0]}</Badge>}
          </AppButton>
        ))}
        <Tray>
          <Line d="M3 10.500l5-5 5 5" w={1.3} />
          <Line d="M10 3H1.500v8.500H11V8M4 14h5M6.500 11.500V14M12 2h3v4h-3zM13.500 6v8" w={1.1} s={18} />
          <Line d="M1.500 6v4H4l3.500 3V3L4 6zM9.500 6q1.500 2 0 4M11.500 4.500q2.500 3.500 0 7M13.500 3q3.500 5 0 10" w={1.1} s={18} />
          <Clock dateTime="2023-03-05T22:39">
            10:39 PM
            <br />
            3/5/2023
          </Clock>
          <Notice>1</Notice>
        </Tray>
      </Taskbar>
    </Screen>
  );
}
